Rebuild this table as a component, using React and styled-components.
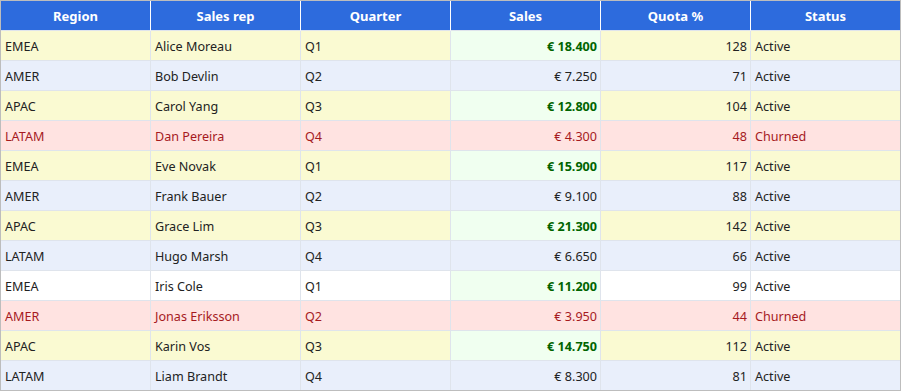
import React from "react";
import styled, { createGlobalStyle, css } from "styled-components";

const Global = createGlobalStyle`
  html, body { margin: 0; padding: 0; background: #ffffff; }
  body { font-family: "Noto Sans", "Open Sans", sans-serif; }
  * { box-sizing: border-box; }
`;

const tones = {
  yellow: "#fafad2",
  blue: "#e9effb",
  white: "#ffffff",
  red: "#ffe3e1",
};

const Table = styled.div`
  width: 901px;
  height: 391px;
  border: 1px solid #bdbdbd;
  display: grid;
  grid-template-columns: repeat(5, 150px) 149px;
  grid-template-rows: 30px repeat(12, 30px);
  overflow: hidden;
`;

const Head = styled.div`
  background: #2d6bdd;
  color: #ffffff;
  font-weight: 700;
  font-size: 13px;
  display: flex;
  align-items: center;
  justify-content: center;
  border-right: ${(p) => (p.$last ? "none" : "1px solid #ffffff")};
  border-bottom: 1px solid #dfe4ec;
`;

const Cell = styled.div`
  background: ${(p) => (p.$hot ? "#f0fff0" : tones[p.$tone])};
  color: ${(p) => (p.$hot ? "#006400" : p.$tone === "red" ? "#a61a1e" : "#222222")};
  font-weight: ${(p) => (p.$hot ? 700 : 400)};
  font-size: 12.6px;
  display: flex;
  align-items: center;
  padding: 1px 4px 0 4px;
  justify-content: ${(p) => (p.$right ? "flex-end" : "flex-start")};
  border-right: ${(p) => (p.$last ? "none" : "1px solid #dfe4ec")};
  border-bottom: 1px solid #dfe4ec;
  white-space: nowrap;
  ${(p) =>
    p.$right &&
    css`
      padding-right: 3px;
    `}
`;

const rows = [
  ["EMEA", "Alice Moreau", "Q1", 18400, 128, "Active", "yellow"],
  ["AMER", "Bob Devlin", "Q2", 7250, 71, "Active", "blue"],
  ["APAC", "Carol Yang", "Q3", 12800, 104, "Active", "yellow"],
  ["LATAM", "Dan Pereira", "Q4", 4300, 48, "Churned", "red"],
  ["EMEA", "Eve Novak", "Q1", 15900, 117, "Active", "yellow"],
  ["AMER", "Frank Bauer", "Q2", 9100, 88, "Active", "blue"],
  ["APAC", "Grace Lim", "Q3", 21300, 142, "Active", "yellow"],
  ["LATAM", "Hugo Marsh", "Q4", 6650, 66, "Active", "blue"],
  ["EMEA", "Iris Cole", "Q1", 11200, 99, "Active", "white"],
  ["AMER", "Jonas Eriksson", "Q2", 3950, 44, "Churned", "red"],
  ["APAC", "Karin Vos", "Q3", 14750, 112, "Active", "yellow"],
  ["LATAM", "Liam Brandt", "Q4", 8300, 81, "Active", "blue"],
];

const fmt = (n) => "€ " + n.toString().replace(/\B(?=(\d{3})+(?!\d))/g, ".");

const headers = ["Region", "Sales rep", "Quarter", "Sales", "Quota %", "Status"];

export default function App() {
  return (
    <>
      <Global />
      <Table>
        {headers.map((h, i) => (
          <Head key={h} $last={i === 5}>
            {h}
          </Head>
        ))}
        {rows.map(([region, rep, q, sales, quota, status, tone]) => {
          const hot = sales >= 10000;
          return (
            <React.Fragment key={rep}>
              <Cell $tone={tone}>{region}</Cell>
              <Cell $tone={tone}>{rep}</Cell>
              <Cell $tone={tone}>{q}</Cell>
              <Cell $tone={tone} $hot={hot} $right>
                {fmt(sales)}
              </Cell>
              <Cell $tone={tone} $right>
                {quota}
              </Cell>
              <Cell $tone={tone} $last>
                {status}
              </Cell>
            </React.Fragment>
          );
        })}
      </Table>
    </>
  );
}
